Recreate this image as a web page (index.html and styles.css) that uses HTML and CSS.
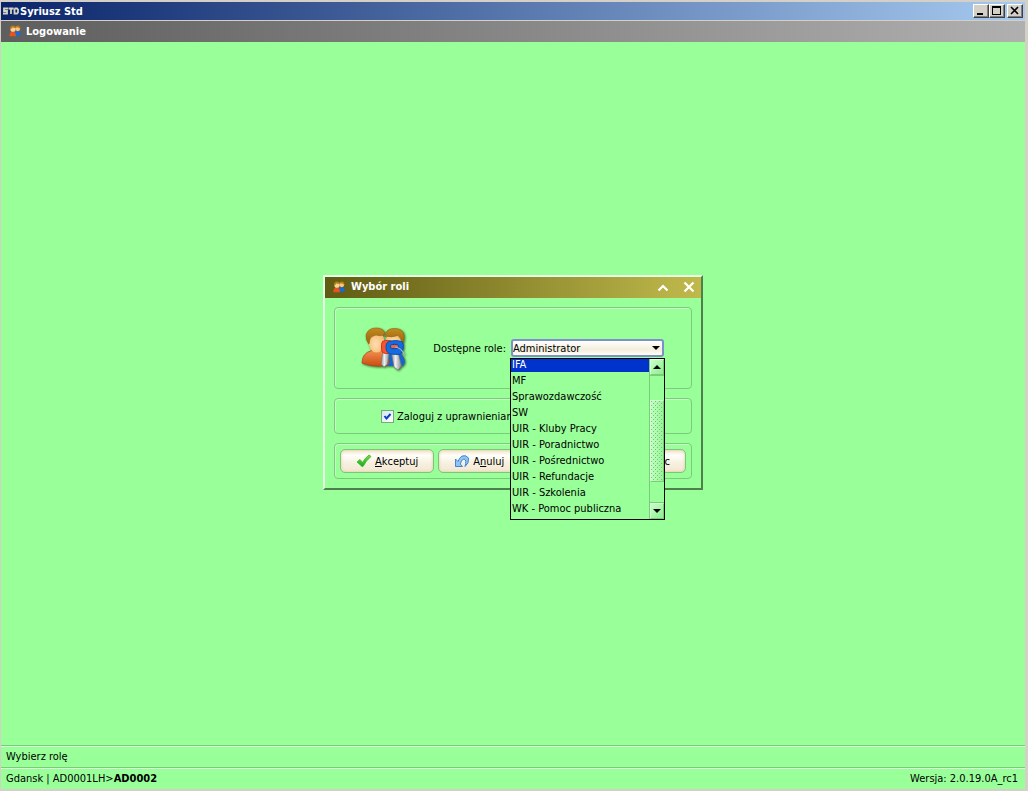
FILE: index.html
```html
<!DOCTYPE html>
<html lang="pl">
<head>
<meta charset="utf-8">
<title>Syriusz Std</title>
<link rel="stylesheet" href="styles.css">
</head>
<body>
<svg class="defs" width="0" height="0" aria-hidden="true">
  <defs>
    <linearGradient id="hair" x1="0" y1="0" x2="0" y2="1"><stop offset="0" stop-color="#c48a20"/><stop offset="1" stop-color="#94640c"/></linearGradient>
    <radialGradient id="face" cx=".45" cy=".6" r=".6"><stop offset="0" stop-color="#ffe0b4"/><stop offset="1" stop-color="#f6b468"/></radialGradient>
    <linearGradient id="orange" x1="0" y1="0" x2="0" y2="1"><stop offset="0" stop-color="#f09050"/><stop offset="1" stop-color="#cc4c10"/></linearGradient>
    <linearGradient id="metal"><stop offset="0" stop-color="#8c8c8c"/><stop offset=".4" stop-color="#f0f0f0"/><stop offset="1" stop-color="#848484"/></linearGradient>
    <linearGradient id="tick" x1="0" y1="0" x2="0" y2="1"><stop offset="0" stop-color="#7be04a"/><stop offset="1" stop-color="#18a818"/></linearGradient>
    <symbol id="users" viewBox="0 0 12 12">
      <path d="M6 10.500V7.500Q7 6 9 6Q11.600 6 11.600 10.500Z" fill="#1868e0"/>
      <circle cx="8.800" cy="3.800" r="2.400" fill="#fcc47c"/><path d="M6.200 3.400Q6 .4 8.800.5Q11.600.5 11.300 4L9.500 2.600H7Z" fill="#b87c18"/>
      <path d="M.3 11.300Q.3 6.400 3.600 6.400Q7 6.400 7 11.300Z" fill="#e4541c"/>
      <circle cx="4" cy="4.200" r="2.600" fill="#ffd094"/><path d="M1.200 4.400Q.8.600 3.800.600Q6.600.600 6.400 3L3.400 2.600Q2.600 4 1.200 4.400Z" fill="#b87c18"/>
    </symbol>
  </defs>
</svg>
<div class="window">
  <header class="titlebar">
    <svg class="std-logo" viewBox="0 0 16 8" width="16" height="8" aria-hidden="true"><path d="M5 1.500H1V4H4V6.500H0M5.500 1.500H10.500M8 1.500V7M11.500 1.500H14L15 2.500V5.500L14 6.500H11.500V1.500" fill="none" stroke="#d8d4c4" stroke-width="1.800"/></svg>
    <h1 class="titlebar-text">Syriusz Std</h1>
    <div class="window-buttons">
      <button class="sysbtn" aria-label="Minimalizuj"><svg viewBox="0 0 12 10" width="12" height="10"><path d="M2 7H8V9H2Z"/></svg></button>
      <button class="sysbtn" aria-label="Maksymalizuj"><svg viewBox="0 0 12 10" width="12" height="10"><path fill-rule="evenodd" d="M1 0H10V9H1ZM2 2V8H9V2Z"/></svg></button>
      <button class="sysbtn sysbtn-close" aria-label="Zamknij"><svg viewBox="0 0 12 10" width="12" height="10"><path d="M2 1L9 8M9 1L2 8" stroke="#000" stroke-width="1.600"/></svg></button>
    </div>
  </header>
  <div class="caption">
    <svg class="caption-icon" width="12" height="12" aria-hidden="true"><use href="#users"/></svg>
    <h2 class="caption-text">Logowanie</h2>
  </div>
  <main class="desktop">
    <section class="dialog" role="dialog" aria-labelledby="dialog-title">
      <div class="dialog-title">
        <svg width="12" height="12" aria-hidden="true"><use href="#users"/></svg>
        <h3 class="dialog-name" id="dialog-title">Wybór roli</h3>
        <button class="dialog-btn" aria-label="Zwiń"><svg viewBox="0 0 12 12" width="12" height="12"><path d="M1.500 9.500L6 5L10.500 9.500" fill="none" stroke="#fff" stroke-width="2.200"/></svg></button>
        <button class="dialog-btn" aria-label="Zamknij okno"><svg viewBox="0 0 12 12" width="12" height="12"><path d="M1.500 1.500L10.500 10.500M10.500 1.500L1.500 10.500" stroke="#fff" stroke-width="2.200"/></svg></button>
      </div>
      <form class="dialog-body">
        <div class="panel role-panel">
          <svg class="role-icon" viewBox="0 0 48 48" width="48" height="48" aria-hidden="true">
            <path d="M24 40V30Q27 25 33 25Q43 26 44 36L42 40Z" fill="#1764cc"/>
            <ellipse cx="33" cy="15" rx="8" ry="10" fill="url(#face)"/>
            <path d="M24 11Q24 3 32 2.500Q43 2 43 10Q43 16 41.500 18Q40 12 37 9.500Q30 12 25 10Z" fill="url(#hair)" stroke="#946410" stroke-width=".6"/>
            <path d="M1 37Q1 27 11 24.500H21Q27 27 28 36L27 39Q14 42 1 37Z" fill="url(#orange)" stroke="#b84a10" stroke-width=".8"/>
            <ellipse cx="15.500" cy="16" rx="8" ry="10.500" fill="url(#face)"/>
            <path d="M8 18Q4.500 14 5 9Q7 2 15 2Q22 2 24 7Q22 11 15 9Q10 10 9 13Z" fill="url(#hair)" stroke="#946410" stroke-width=".6"/>
            <path d="M22 25H28.500L26.500 38L23 41L20 38Z" fill="url(#metal)" stroke="#707070" stroke-width=".6"/>
            <path d="M30.500 28L37 26L40.500 40L37 44L33 41Z" fill="url(#metal)" stroke="#707070" stroke-width=".6"/>
            <rect x="20.500" y="14.500" width="12" height="13" rx="4" fill="#f45434" stroke="#d03818"/>
            <path d="M28 15.500Q34 13.500 41 15.500Q43 18 42 23Q41 28 37 28.500L29 28Q24.500 26 25 20Q25 16.500 28 15.500Z" fill="#146ce0" stroke="#0c50b4"/>
            <ellipse cx="33.500" cy="20.500" rx="4.200" ry="2.200" fill="#e06850" stroke="#0c3c94"/>
            <path d="M34 21Q41 22 43.500 29" fill="none" stroke="#a8b8d0" stroke-width="1.200"/>
          </svg>
          <div class="role-field">
            <label for="role">Dostępne role:</label>
            <div class="combo">
              <select class="combo-select" id="role"><option>Administrator</option></select>
              <svg class="combo-arrow" viewBox="0 0 8 4" width="8" height="4" aria-hidden="true"><path d="M0 0H8L4 4Z"/></svg>
              <div class="popup">
                <ul class="options" role="listbox" aria-label="Dostępne role">
                  <li class="option option-active" role="option" aria-selected="true">IFA</li>
                  <li class="option" role="option">MF</li>
                  <li class="option" role="option">Sprawozdawczość</li>
                  <li class="option" role="option">SW</li>
                  <li class="option" role="option">UIR - Kluby Pracy</li>
                  <li class="option" role="option">UIR - Poradnictwo</li>
                  <li class="option" role="option">UIR - Pośrednictwo</li>
                  <li class="option" role="option">UIR - Refundacje</li>
                  <li class="option" role="option">UIR - Szkolenia</li>
                  <li class="option" role="option">WK - Pomoc publiczna</li>
                </ul>
                <div class="scrollbar">
                  <button type="button" class="scroll-btn" aria-label="W górę"><svg viewBox="0 0 8 4" width="8" height="4"><path d="M0 4H8L4 0Z"/></svg></button>
                  <div class="scroll-track"><div class="scroll-thumb"></div></div>
                  <button type="button" class="scroll-btn" aria-label="W dół"><svg viewBox="0 0 8 4" width="8" height="4"><path d="M0 0H8L4 4Z"/></svg></button>
                </div>
              </div>
            </div>
          </div>
        </div>
        <div class="panel check-panel">
          <input class="check" type="checkbox" id="grants" checked>
          <label for="grants">Zaloguj z uprawnieniami</label>
        </div>
        <div class="panel button-panel">
          <button type="button" class="btn"><svg viewBox="0 0 16 14" width="16" height="14" aria-hidden="true"><path d="M1 8L4 5.500L6.500 8.500Q9 4 13 1L15 2.500Q10 6.500 7 12.500H6Z" fill="url(#tick)" stroke="#35b52a" stroke-width=".8"/></svg><span class="btn-text"><u>A</u>kceptuj</span></button>
          <button type="button" class="btn"><svg viewBox="0 0 16 14" width="16" height="14" aria-hidden="true"><path d="M1.500 5V12.500H8.500L6.300 10Q7.500 5 10 5Q13 6 11 12.500Q15.500 9 14.500 4Q12 .5 8 2Q5 4 4 7.500Z" fill="#8fc4f4" stroke="#2470cc" stroke-width=".8"/></svg><span class="btn-text">A<u>n</u>uluj</span></button>
          <button type="button" class="btn btn-help"><svg viewBox="0 0 16 14" width="16" height="14" aria-hidden="true"><circle cx="8" cy="7" r="6" fill="#4b90e0"/></svg><span class="btn-text">Pomoc</span></button>
        </div>
      </form>
    </section>
  </main>
  <footer>
    <div class="status">Wybierz rolę</div>
    <div class="status"><span>Gdansk | AD0001LH&gt;<b>AD0002</b></span><span>Wersja: 2.0.19.0A_rc1</span></div>
  </footer>
</div>
</body>
</html>
```
FILE: styles.css
```css
* { box-sizing: border-box; }
body {
  margin: 0;
  font: 11px/16px "DejaVu Sans Condensed", "DejaVu Sans", sans-serif;
  color: #000;
}
button, select, input { font: inherit; color: inherit; margin: 0; }
h1, h2, h3 { margin: 0; font-size: 11px; line-height: 16px; }
.defs { position: absolute; }
.window {
  min-height: 100vh;
  display: flex;
  flex-direction: column;
  background: #99ff99;
  border: solid #d4d0c8;
  border-width: 2px 3px 2px 1px;
}
.titlebar {
  display: flex;
  align-items: center;
  height: 19px;
  padding: 0 2px;
  color: #fff;
  background: linear-gradient(90deg, #0a246a, #a6caf0);
  border-bottom: 1px solid #d4d0c8;
}
.titlebar-text { padding: 2px 0 0 1px; }
.window-buttons { display: flex; margin-left: auto; }
.sysbtn {
  display: flex;
  width: 16px;
  height: 14px;
  padding: 1px;
  background: #d4d0c8;
  border: 1px solid;
  border-color: #fff #404040 #404040 #fff;
  box-shadow: inset -1px -1px #808080;
}
.sysbtn-close { margin-left: 2px; }
.caption {
  display: flex;
  align-items: center;
  gap: 5px;
  height: 21px;
  padding: 0 8px 2px;
  color: #fff;
  background: linear-gradient(90deg, #5e5e5e, #b0b0b0);
}
.caption-text { padding-top: 2px; }
.desktop {
  flex: 1;
  display: flex;
  align-items: center;
  justify-content: center;
  padding-bottom: 22px;
}
.dialog {
  width: 380px;
  border: 2px solid;
  border-color: #e4ffe4 #4d804d #4d804d #e4ffe4;
}
.dialog-title {
  display: flex;
  align-items: center;
  gap: 6px;
  height: 21px;
  padding: 0 6px 2px 8px;
  color: #fff;
  background: linear-gradient(90deg, #5f5b13, #c0ba4c);
}
.dialog-name { flex: 1; }
.dialog-btn {
  display: flex;
  margin-left: 8px;
  padding: 0;
  border: 0;
  background: none;
}
.dialog-body {
  display: flex;
  flex-direction: column;
  gap: 9px;
  padding: 9px;
}
.panel {
  display: flex;
  align-items: center;
  border: 1px solid #7acc7a;
  border-radius: 4px;
  box-shadow: inset 1px 1px #c8ffc8;
}
.panel label, .btn-text { padding-top: 2px; }
.role-panel {
  justify-content: space-between;
  height: 82px;
  padding: 0 27px 0 26px;
}
.role-icon { margin-top: 4px; filter: drop-shadow(1px 1px 1px #3a703a); }
.role-field { display: flex; align-items: center; gap: 5px; }
.combo { position: relative; width: 153px; }
.combo-select {
  display: block;
  appearance: none;
  width: 100%;
  height: 18px;
  padding: 0;
  border: 2px solid #7f8fcc;
  border-radius: 3px;
  outline: none;
  background: linear-gradient(#fff, #f4eedc 60%, #fffdf4);
}
.combo-arrow { position: absolute; right: 4px; top: 7px; pointer-events: none; }
.popup {
  position: absolute;
  z-index: 1;
  top: 19px;
  left: -1px;
  display: flex;
  width: 155px;
  height: 162px;
  border: 1px solid #000;
  background: #99ff99;
}
.options {
  flex: 1;
  display: flex;
  flex-direction: column;
  margin: 0;
  padding: 0;
  list-style: none;
}
.option {
  flex: none;
  height: 16px;
  padding: 2px 0 0 1px;
  line-height: 14px;
  white-space: nowrap;
}
.option-active {
  height: 13px;
  padding-top: 0;
  line-height: 12px;
  color: #fff;
  background: #0033cc;
}
.scrollbar {
  display: flex;
  flex-direction: column;
  width: 15px;
  border-left: 1px solid #7acc7a;
}
.scroll-btn {
  display: flex;
  align-items: center;
  justify-content: center;
  height: 16px;
  padding: 0;
  border: 1px solid;
  border-color: #d8ffd8 #7acc7a #7acc7a #d8ffd8;
  background: linear-gradient(135deg, #c8ffc8, #8cf08c);
}
.scroll-track { flex: 1; padding-top: 24px; border: solid #7acc7a; border-width: 1px 0; }
.scroll-thumb {
  height: 82px;
  border: 1px solid;
  border-color: #d8ffd8 #7acc7a #7acc7a #d8ffd8;
  background:
    conic-gradient(from 270deg at 1px 1px, #74c474 25%, transparent 0) 2px 2px / 4px 4px,
    conic-gradient(from 270deg at 1px 1px, #74c474 25%, transparent 0) 4px 4px / 4px 4px,
    linear-gradient(90deg, #c0ffc0, #99f599);
}
.check-panel { height: 36px; padding-left: 46px; gap: 3px; white-space: nowrap; }
.check {
  appearance: none;
  width: 13px;
  height: 13px;
  border: 1px solid #7aa87a;
  background: linear-gradient(135deg, #cfe8f0, #fff);
}
.check:checked {
  background:
    url("data:image/svg+xml,%3Csvg xmlns='http://www.w3.org/2000/svg' viewBox='0 0 11 11'%3E%3Cpath d='M2.500 5L4.500 7.500L8.500 3' fill='none' stroke='%231038c8' stroke-width='2'/%3E%3C/svg%3E"),
    linear-gradient(135deg, #cfe8f0, #fff);
}
.button-panel { height: 36px; padding: 0 5px; gap: 4px; }
.btn {
  display: flex;
  align-items: center;
  gap: 3px;
  height: 24px;
  padding: 0 15px;
  border: 1px solid #80c47c;
  border-radius: 5px;
  background: linear-gradient(#f2e8d0, #fffef8 25%, #f6f0e0 60%, #f2e8d0);
  box-shadow: inset 0 0 3px #d8c8a0;
}
.btn-help { margin-left: auto; }
.status {
  display: flex;
  justify-content: space-between;
  height: 22px;
  padding: 3px 7px 0 5px;
  border-top: 1px solid #7acc7a;
  box-shadow: inset 0 1px #d8ffd8;
}
```
